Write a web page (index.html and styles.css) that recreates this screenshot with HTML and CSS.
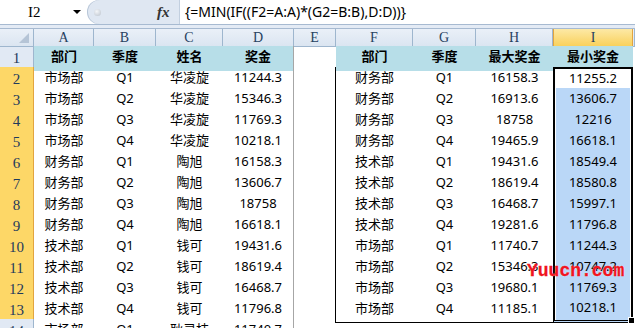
FILE: index.html
```html
<!DOCTYPE html>
<html lang="zh">
<head>
    <meta charset="UTF-8">
    <title>奖金表</title>
    <link rel="stylesheet" href="styles.css">
</head>
<body>
    <div class="fbar">
        <div class="namebox"><span class="ref">I2</span><span class="arrow"></span></div>
        <div class="tools"><span class="knob"></span><span class="fx">fx</span></div>
        <div class="formula">{=MIN(IF((F2=A:A)*(G2=B:B),D:D))}</div>
    </div>
    <div class="strip"></div>

    <div class="sheet">
        <div class="row heads">
            <div class="corner"><span class="tri"></span></div>
            <div class="col">A</div><div class="col">B</div><div class="col">C</div><div class="col">D</div>
            <div class="col">E</div><div class="col">F</div><div class="col">G</div><div class="col">H</div>
            <div class="col cur">I</div><div class="col"></div>
        </div>

        <div class="row">
            <div class="rh">1</div>
            <div class="c hd">部门</div><div class="c hd">季度</div><div class="c hd">姓名</div><div class="c hd d">奖金</div>
            <div class="c"></div>
            <div class="c hd">部门</div><div class="c hd">季度</div><div class="c hd">最大奖金</div><div class="c hd">最小奖金</div><div class="c"></div>
        </div>
        <div class="row">
            <div class="rh on">2</div>
            <div class="c">市场部</div><div class="c">Q1</div><div class="c">华凌旋</div><div class="c d">11244.3</div>
            <div class="c e"></div>
            <div class="c">财务部</div><div class="c">Q1</div><div class="c">16158.3</div><div class="c sel first">11255.2</div><div class="c"></div>
        </div>
        <div class="row">
            <div class="rh on">3</div>
            <div class="c">市场部</div><div class="c">Q2</div><div class="c">华凌旋</div><div class="c d">15346.3</div>
            <div class="c e"></div>
            <div class="c">财务部</div><div class="c">Q2</div><div class="c">16913.6</div><div class="c sel">13606.7</div><div class="c"></div>
        </div>
        <div class="row">
            <div class="rh on">4</div>
            <div class="c">市场部</div><div class="c">Q3</div><div class="c">华凌旋</div><div class="c d">11769.3</div>
            <div class="c e"></div>
            <div class="c">财务部</div><div class="c">Q3</div><div class="c">18758</div><div class="c sel">12216</div><div class="c"></div>
        </div>
        <div class="row">
            <div class="rh on">5</div>
            <div class="c">市场部</div><div class="c">Q4</div><div class="c">华凌旋</div><div class="c d">10218.1</div>
            <div class="c e"></div>
            <div class="c">财务部</div><div class="c">Q4</div><div class="c">19465.9</div><div class="c sel">16618.1</div><div class="c"></div>
        </div>
        <div class="row">
            <div class="rh on">6</div>
            <div class="c">财务部</div><div class="c">Q1</div><div class="c">陶旭</div><div class="c d">16158.3</div>
            <div class="c e"></div>
            <div class="c">技术部</div><div class="c">Q1</div><div class="c">19431.6</div><div class="c sel">18549.4</div><div class="c"></div>
        </div>
        <div class="row">
            <div class="rh on">7</div>
            <div class="c">财务部</div><div class="c">Q2</div><div class="c">陶旭</div><div class="c d">13606.7</div>
            <div class="c e"></div>
            <div class="c">技术部</div><div class="c">Q2</div><div class="c">18619.4</div><div class="c sel">18580.8</div><div class="c"></div>
        </div>
        <div class="row">
            <div class="rh on">8</div>
            <div class="c">财务部</div><div class="c">Q3</div><div class="c">陶旭</div><div class="c d">18758</div>
            <div class="c e"></div>
            <div class="c">技术部</div><div class="c">Q3</div><div class="c">16468.7</div><div class="c sel">15997.1</div><div class="c"></div>
        </div>
        <div class="row">
            <div class="rh on">9</div>
            <div class="c">财务部</div><div class="c">Q4</div><div class="c">陶旭</div><div class="c d">16618.1</div>
            <div class="c e"></div>
            <div class="c">技术部</div><div class="c">Q4</div><div class="c">19281.6</div><div class="c sel">11796.8</div><div class="c"></div>
        </div>
        <div class="row">
            <div class="rh on">10</div>
            <div class="c">技术部</div><div class="c">Q1</div><div class="c">钱可</div><div class="c d">19431.6</div>
            <div class="c e"></div>
            <div class="c">市场部</div><div class="c">Q1</div><div class="c">11740.7</div><div class="c sel">11244.3</div><div class="c"></div>
        </div>
        <div class="row">
            <div class="rh on">11</div>
            <div class="c">技术部</div><div class="c">Q2</div><div class="c">钱可</div><div class="c d">18619.4</div>
            <div class="c e"></div>
            <div class="c">市场部</div><div class="c">Q2</div><div class="c">15346.3</div><div class="c sel">10747.2</div><div class="c"></div>
        </div>
        <div class="row">
            <div class="rh on">12</div>
            <div class="c">技术部</div><div class="c">Q3</div><div class="c">钱可</div><div class="c d">16468.7</div>
            <div class="c e"></div>
            <div class="c">市场部</div><div class="c">Q3</div><div class="c">19680.1</div><div class="c sel">11769.3</div><div class="c"></div>
        </div>
        <div class="row">
            <div class="rh on">13</div>
            <div class="c">技术部</div><div class="c">Q4</div><div class="c">钱可</div><div class="c d">11796.8</div>
            <div class="c e"></div>
            <div class="c last">市场部</div><div class="c last">Q4</div><div class="c last">11185.1</div><div class="c sel end">10218.1<span class="handle"></span></div><div class="c"></div>
        </div>
        <div class="row">
            <div class="rh">14</div>
            <div class="c">市场部</div><div class="c">Q1</div><div class="c">耿灵枝</div><div class="c d">11740.7</div>
            <div class="c"></div>
            <div class="c"></div><div class="c"></div><div class="c"></div><div class="c"></div><div class="c"></div>
        </div>

        <div class="mark">Yuucn.com</div>
    </div>
</body>
</html>
```

FILE: styles.css
```css
body {
    margin: 0;
    width: 635px;
    height: 328px;
    overflow: hidden;
    background: #fff;
    font-family: "Noto Sans", "Noto Sans CJK SC", sans-serif;
    color: #000;
}

/* formula bar */
.fbar {
    display: flex;
    height: 24px;
    border-bottom: 1px solid #a7bad1;
    background: #fff;
}
.namebox {
    width: 87px;
    display: flex;
    align-items: center;
}
.ref {
    margin-left: 28px;
    font-family: "Liberation Serif", serif;
    font-size: 15px;
}
.arrow {
    margin-left: auto;
    margin-right: 6px;
    border-left: 4px solid transparent;
    border-right: 4px solid transparent;
    border-top: 4px solid #000;
}
.tools {
    width: 92px;
    display: flex;
    align-items: center;
    background: #dfe7f2;
    border-radius: 12px 0 0 12px;
    box-shadow: inset 1px 0 0 #b9c7d8;
}
.knob {
    width: 7px;
    height: 7px;
    margin-left: 7px;
    border-radius: 50%;
    background: radial-gradient(circle at 40% 35%, #f4f6f9, #b9c1cb);
}
.fx {
    margin-left: 56px;
    font-family: "Liberation Serif", serif;
    font-style: italic;
    font-weight: bold;
    font-size: 15px;
    color: #333;
}
.formula {
    flex: 1;
    padding-left: 5px;
    border-left: 1px solid #c2cfdf;
    font-size: 14px;
    line-height: 24px;
    white-space: nowrap;
}
.strip {
    height: 3px;
    background: #e4ebf5;
    border-bottom: 1px solid #a7bad1;
}

/* sheet */
.sheet {
    position: relative;
}
.row {
    display: grid;
    grid-template-columns: 34px 60px 62px 67px 71px 42px 77px 63px 77px 80px 1fr;
    height: 21px;
}
.row.heads {
    height: 17px;
}
.corner, .col {
    box-sizing: border-box;
    background: linear-gradient(#eaf0f8, #dbe5f1);
    border-right: 1px solid #9eb6ce;
    border-bottom: 1px solid #9eb6ce;
}
.corner {
    position: relative;
}
.tri {
    position: absolute;
    right: 4px;
    bottom: 3px;
    border-left: 10px solid transparent;
    border-bottom: 10px solid #b5c4d6;
}
.col {
    text-align: center;
    font-family: "Liberation Serif", serif;
    font-size: 14px;
    line-height: 17px;
    color: #27415f;
}
.col.cur {
    background: linear-gradient(#fde9a6, #f9d15c);
    border-color: #e2a53f;
    border-left: 1px solid #e2a53f;
}
.rh {
    box-sizing: border-box;
    background: #e1e9f4;
    border-right: 1px solid #9eb6ce;
    border-bottom: 1px solid #c5d3e3;
    text-align: center;
    font-family: "Liberation Serif", serif;
    font-size: 15px;
    line-height: 24px;
    color: #1f3a5c;
}
.rh.on {
    background: #fdd767;
    border-right-color: #e2a53f;
    border-bottom-color: #e6ae4c;
}
.c {
    box-sizing: border-box;
    text-align: center;
    font-size: 13px;
    line-height: 21px;
    white-space: nowrap;
    overflow: hidden;
}
.hd {
    background: #b7dee8;
    font-weight: bold;
}
.d {
    border-right: 1px solid #a6a6a6;
}
.e {
    border-right: 1px solid #000;
}
.last {
    border-bottom: 1px solid #000;
}

/* selection I2:I13 */
.sel {
    background: #bad7f7;
    border-left: 2px solid #000;
    border-right: 2px solid #000;
    box-shadow: inset 1px 0 0 #fff, inset -1px 0 0 #fff;
    line-height: 21px;
}
.sel.first {
    background: #fff;
    border-top: 2px solid #000;
    line-height: 19px;
}
.sel.end {
    position: relative;
    overflow: visible;
    border-bottom: 3px double #000;
    line-height: 18px;
}
.handle {
    position: absolute;
    right: -4px;
    bottom: -4px;
    width: 5px;
    height: 5px;
    background: #000;
    border: 1px solid #fff;
}

.mark {
    position: absolute;
    left: 527px;
    top: 231px;
    width: 100px;
    font-family: "Liberation Mono", "DejaVu Sans Mono", monospace;
    font-weight: bold;
    font-size: 18px;
    line-height: 22px;
    color: #f01420;
    -webkit-text-stroke: 0.3px #f01420;
    text-shadow: 0 0 1px #fff;
    white-space: nowrap;
}
```
